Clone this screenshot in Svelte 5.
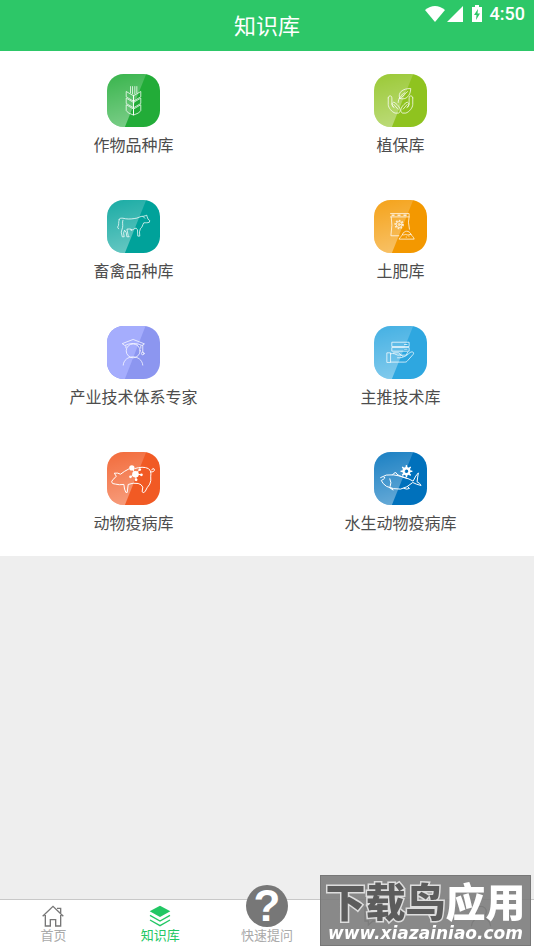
<script>
    const libraries = [
        { name: '作物品种库', icon: 'wheat', color: '#22ac38' },
        { name: '植保库', icon: 'plant', color: '#8fc31f' },
        { name: '畜禽品种库', icon: 'cow', color: '#00a29a' },
        { name: '土肥库', icon: 'soil', color: '#f39800' },
        { name: '产业技术体系专家', icon: 'expert', color: '#8c96f0' },
        { name: '主推技术库', icon: 'tech', color: '#2ea7e0' },
        { name: '动物疫病库', icon: 'pig', color: '#f15a24' },
        { name: '水生动物疫病库', icon: 'fish', color: '#0071bc' }
    ];
    const spikes = [0, 45, 90, 135, 180, 225, 270, 315];
</script>

<div class="page">
    <header>
        <h1>知识库</h1>
        <div class="status">
            <svg class="wifi" viewBox="0 0 20 16"><path d="M0 4Q10-4 20 4L10 16z" /></svg>
            <svg class="signal" viewBox="0 0 16 16"><path d="M16 0v16H0z" /></svg>
            <svg class="battery" viewBox="0 0 10 17">
                <path d="M3 0h4v2h3v15H0V2h3z" />
                <path class="bolt" d="M6 4L2 10h2.500L4 15l4-6.500H5.500z" />
            </svg>
            <span>4:50</span>
        </div>
    </header>

    <main>
        {#each libraries as item}
            <a class="cell" href="#{item.icon}">
                <svg class="tile" viewBox="0 0 160 160">
                    <defs>
                        <linearGradient id="shine-{item.icon}" x1="0.3" y1="0" x2="0.5" y2="1">
                            <stop offset="0" stop-color="#fff" stop-opacity=".12" />
                            <stop offset="1" stop-color="#fff" stop-opacity=".4" />
                        </linearGradient>
                    </defs>
                    <rect width="160" height="160" rx="50" fill={item.color} />
                    {#if item.icon === 'expert'}
                        <path d="M50 0H110Q114 0 116 1L54 160H50A50 50 0 0 1 0 110V50A50 50 0 0 1 50 0z" fill="#a5adfd" />
                    {:else}
                        <path d="M50 0H110Q114 0 118 1L54 160H50A50 50 0 0 1 0 110V50A50 50 0 0 1 50 0z" fill="url(#shine-{item.icon})" />
                    {/if}
                    <g class="lines" class:bold={item.icon === 'pig' || item.icon === 'fish'}>
                        {#if item.icon === 'wheat'}
                            <path d="M71 38v19M77 38v22M84 38v22M90 38v19M80 64v59" />
                            <path d="M58 54v15l22 13V67zM58 74v15l22 13V87zM58 94v16q2 8 22 14v-17z" />
                            <path d="M102 54v15L80 82V67zM102 74v15l-22 13V87zM102 94v16q-2 8-22 14v-17z" />
                        {:else if item.icon === 'plant'}
                            <path d="M43 72c0-8 11-8 11 0v19c0 3 3 7 6 10M60 101c-6-5-8-14 0-16 8 4 20 16 19 26-1 4-3 7-5 7H64c-10-3-21-16-21-26V72M60 92l12 14" />
                            <path d="M117 72c0-8-11-8-11 0v19c0 3-3 7-6 10M100 101c6-5 8-14 0-16-8 4-20 16-19 26 1 4 3 7 5 7h10c10-3 21-16 21-26V72M100 92l-12 14" />
                            <path d="M73 86c1-14 7-22 20-29M78 74c-8-17 8-31 33-30-1 21-13 36-33 30zM78 74c10-7 17-14 23-21" />
                        {:else if item.icon === 'cow'}
                            <path d="M37 59c-4 9 1 15-5 23l3 5M36 59c2-5 7-4 12-4 11 3 22 3 34 1 12 0 17-8 29-7l6-2 3-1 1 4 3 8 5 4-1 5c-6 3-11 1-17 2-4 6-4 14-10 17l-3 10 1 13h-6l-1-19-4-5c-6 0-7 5-12 5-5-4-12-2-16-2l4 19 3 4h-7l-2-13-5-7-3 9 2 11h-6l-3-14 4-14c2-8-2-14 1-22M109 50l5 5M71 90l4 2" />
                        {:else if item.icon === 'soil'}
                            <path d="M50 41h56v10l-2 16 3 21M52 51l2 25-3 32h24M50 51h56" />
                            <path stroke-width="5" stroke-dasharray="9 9" stroke-linecap="butt" d="M53 46h50" />
                            <circle cx="76" cy="74" r="12" stroke-width="5" stroke-dasharray="5 4" stroke-linecap="butt" />
                            <circle cx="76" cy="74" r="9" />
                            <circle cx="76" cy="74" r="3" />
                            <path d="M76 117c2-6 8-6 10-13 5-13 20-13 26 0 3 6 7 6 9 13zM86 104c5 5 8-3 13 1 5 3 8-3 13-1M97 112h1M105 109h1" />
                        {:else if item.icon === 'expert'}
                            <path d="M80 41l33 13-7 5c-14-8-39-8-52 0l-7-5zM57 60v6M102 60v7M108 58v21" />
                            <circle cx="79" cy="75" r="21" />
                            <circle cx="108" cy="83" r="4" />
                            <path d="M49 118c2-33 56-34 59 0" />
                        {:else if item.icon === 'tech'}
                            <path d="M55 49h51v13H55zM55 65h51v11H55zM92 56h8M92 70h8M59 81h15l8 7h15l5-9" />
                            <path d="M40 81h10v29H40zM50 84c10-4 14 2 22 4 7-1 14 0 15 4 0 4-7 4-16 4M87 94c10-2 15-9 22-14 6-4 14-1 9 6l-16 18c-3 4-5 5-10 5H50" />
                        {:else if item.icon === 'pig'}
                            <path d="M66 51Q52 58 41 67Q32 62 22 64L28 73L24 78Q16 83 14 90Q14 97 26 97Q36 100 51 98L53 112L57 122H61L64 98Q79 92 94 95Q104 97 108 106L106 120L111 123Q116 120 121 108L129 97Q134 87 132 73Q135 58 125 50Q108 42 84 50" />
                            <path d="M131 60Q144 62 143 52Q138 46 135 54" />
                            <path d="M75 48l11 18 12-12M86 66l18 3M86 66l2 18M86 66l-15 9" />
                            <g class="dots">
                                <circle cx="75" cy="48" r="8" /><circle cx="86" cy="67" r="10" /><circle cx="99" cy="53" r="4" />
                                <circle cx="104" cy="69" r="4" /><circle cx="88" cy="84" r="4" /><circle cx="71" cy="75" r="4" />
                            </g>
                        {:else}
                            <path d="M20 77Q36 66 58 69Q95 74 118 88Q126 70 134 63Q131 80 130 90Q139 94 142 101Q128 98 117 92Q100 108 80 112Q58 113 38 104Q26 96 22 86L29 82" />
                            <path d="M56 69Q60 62 66 62Q69 72 100 80M48 81Q54 93 49 104M46 107L58 115L53 109M90 110Q100 114 107 110L102 105" />
                            <circle cx="31" cy="78" r="1" />
                            <circle cx="98" cy="58" r="9" stroke-width="7" />
                            {#each spikes as angle}
                                <path stroke-width="5" d="M98 47v-5" transform="rotate({angle} 98 58)" />
                            {/each}
                        {/if}
                    </g>
                </svg>
                <span>{item.name}</span>
            </a>
        {/each}
    </main>

    <nav>
        <a href="#home">
            <svg class="tab-icon" viewBox="0 0 66 66">
                <path d="M2 34L33 4l31 30M10 30v33h15V44h16v19h15V30M45 10h11v14" />
            </svg>
            <span>首页</span>
        </a>
        <a class="active" href="#library">
            <svg class="tab-icon" viewBox="0 0 66 66">
                <path class="solid" d="M33 2l31 17-31 17L2 19z" />
                <path d="M3 31l30 17 30-17M3 45l30 17 30-17" />
            </svg>
            <span>知识库</span>
        </a>
        <a href="#ask">
            <b class="ask">?</b>
            <span>快速提问</span>
        </a>
        <a href="#message" aria-label="消息">
            <svg class="tab-icon" viewBox="0 0 66 66"><path d="M6 8h54v40H30L16 60V48H6z" /></svg>
        </a>
        <a href="#mine" aria-label="我的">
            <svg class="tab-icon" viewBox="0 0 66 66"><circle cx="33" cy="20" r="16" /><path d="M4 64c4-36 54-36 58 0" /></svg>
        </a>
    </nav>

    <div class="watermark">
        <div class="brand"><span>下载鸟</span>应用</div>
        <div class="site">www.xiazainiao.com</div>
    </div>
</div>

<style>
    :global(body) {
        background: #eee;
    }

    .page {
        display: flex;
        flex-direction: column;
        min-height: 100vh;
        font-family: Roboto, "Noto Sans CJK SC", sans-serif;
    }

    a {
        color: inherit;
        text-decoration: none;
    }

    header {
        position: relative;
        background: #2dc768;
        color: #fff;
    }

    h1 {
        margin: 0;
        padding-top: 2px;
        font-size: 22px;
        font-weight: 400;
        line-height: 49px;
        text-align: center;
    }

    .status {
        position: absolute;
        top: 4px;
        right: 9px;
        display: flex;
        align-items: center;
        font-size: 18px;
        font-weight: 500;
        line-height: 19px;
    }

    .status svg {
        fill: #fff;
        height: 16px;
    }

    .status .wifi {
        width: 20px;
    }

    .status .signal {
        width: 16px;
        margin: 0 9px 0 2px;
    }

    .status .battery {
        width: 10px;
        height: 17px;
        margin-right: 8px;
    }

    .status .bolt {
        fill: #2dc768;
    }

    main {
        display: grid;
        grid-template-columns: 1fr 1fr;
        padding-bottom: 1px;
        background: #fff;
    }

    .cell {
        display: flex;
        flex-direction: column;
        align-items: center;
        gap: 7px;
        padding: 23px 0 19px;
        color: #4d4d4d;
        font-size: 16px;
        line-height: 24px;
    }

    .tile {
        width: 53px;
        height: 53px;
    }

    .lines {
        fill: none;
        stroke: rgba(255, 255, 255, .75);
        stroke-width: 3;
        stroke-linecap: round;
        stroke-linejoin: round;
    }

    .lines.bold {
        stroke: #fff;
    }

    .dots {
        fill: #fff;
        stroke: none;
    }

    nav {
        display: grid;
        grid-template-columns: repeat(5, 1fr);
        grid-template-rows: 50px;
        margin-top: auto;
        border-top: 1px solid #c8c8c8;
        background: #fff;
        color: #aaa;
        font-size: 13px;
        line-height: 18px;
    }

    nav a {
        display: flex;
        flex-direction: column;
        align-items: center;
        justify-content: flex-end;
        box-sizing: border-box;
        height: 50px;
        padding-bottom: 5px;
    }

    nav a:nth-child(n + 4) {
        padding-bottom: 23px;
    }

    .tab-icon {
        width: 22px;
        height: 22px;
        fill: none;
        stroke: #777;
        stroke-width: 4;
    }

    .active {
        color: #22c764;
    }

    .active .tab-icon {
        stroke: #22c764;
    }

    .active .solid {
        fill: #22c764;
        stroke: none;
    }

    .ask {
        flex: none;
        width: 42px;
        height: 42px;
        border-radius: 50%;
        background: #777;
        color: #fff;
        font-family: "Liberation Sans", sans-serif;
        font-size: 44px;
        line-height: 42px;
        text-align: center;
    }

    .watermark {
        position: fixed;
        right: 3px;
        bottom: 4px;
        box-sizing: border-box;
        width: 211px;
        height: 71px;
        border: 1px solid #777;
        background: rgba(124, 124, 124, .9);
        color: #fff;
        text-align: center;
        white-space: nowrap;
    }

    .brand {
        font-family: "Noto Sans CJK SC", sans-serif;
        font-size: 40px;
        font-weight: 900;
        line-height: 48px;
    }

    .brand span {
        color: #5c5c5c;
        -webkit-text-stroke: 3px #ddd;
        paint-order: stroke fill;
    }

    .site {
        font-family: "DejaVu Sans", sans-serif;
        font-size: 17px;
        font-style: italic;
        font-weight: 700;
        line-height: 18px;
    }
</style>
